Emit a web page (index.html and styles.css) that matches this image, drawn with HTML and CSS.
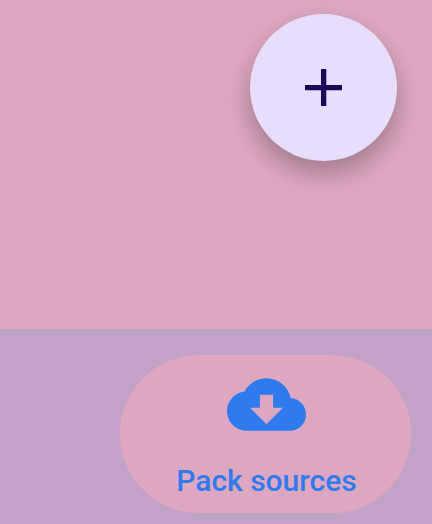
FILE: index.html
```html
<!DOCTYPE html>
<html lang="en">
<head>
<meta charset="utf-8">
<meta name="viewport" content="width=device-width, initial-scale=1">
<title>Pack sources</title>
<link rel="stylesheet" href="styles.css">
</head>
<body>
<main class="content">
  <button class="fab" type="button" aria-label="Add">
    <svg class="fab-icon" viewBox="0 0 63 63" aria-hidden="true"><path d="M29 13h5.300v16h15.700v5.300H34.300v15.700h-5.300V34.300H13v-5.300h16z"/></svg>
  </button>
</main>
<nav class="bottom-bar">
  <a class="tab" href="#sources">
    <svg class="tab-icon" viewBox="0 4 24 16" aria-hidden="true"><path d="M19.35 10.04C18.67 6.59 15.64 4 12 4 9.11 4 6.6 5.64 5.35 8.04 2.34 8.36 0 10.91 0 14c0 3.31 2.69 6 6 6h13c2.76 0 5-2.24 5-5 0-2.64-2.05-4.78-4.65-4.96zM17 13l-5 5-5-5h3V9h4v4h3z"/></svg>
    <span class="tab-label">Pack sources</span>
  </a>
</nav>
</body>
</html>
```
FILE: styles.css
```css
* {
  box-sizing: border-box;
}

body {
  margin: 0;
  min-height: 100vh;
  display: flex;
  flex-direction: column;
  background: #dda7c1;
  font-family: Roboto, "Liberation Sans", sans-serif;
}

.content {
  flex: 1;
  display: flex;
  justify-content: flex-end;
  align-items: flex-start;
  padding: 14px 35px;
}

.fab {
  display: grid;
  place-items: center;
  width: 147px;
  height: 147px;
  padding: 0;
  border: 0;
  border-radius: 50%;
  background: #e8ddfb;
  box-shadow: 0 12px 26px rgba(0, 0, 0, 0.28);
}

.fab-icon {
  width: 63px;
  height: 63px;
  fill: #1b0659;
}

.bottom-bar {
  display: flex;
  justify-content: flex-end;
  padding: 26px 21px 11px;
  background: #c3a2c8;
}

.tab {
  display: flex;
  flex-direction: column;
  align-items: center;
  gap: 32px;
  min-width: 291px;
  padding: 23px 52px 14px 54px;
  border-radius: 79px;
  background: #dda7c1;
  color: #2f7bee;
  text-decoration: none;
}

.tab-icon {
  width: 79px;
  height: 53px;
  fill: currentColor;
}

.tab-label {
  font-size: 30px;
  font-weight: 500;
  line-height: 36px;
  white-space: nowrap;
}
```
